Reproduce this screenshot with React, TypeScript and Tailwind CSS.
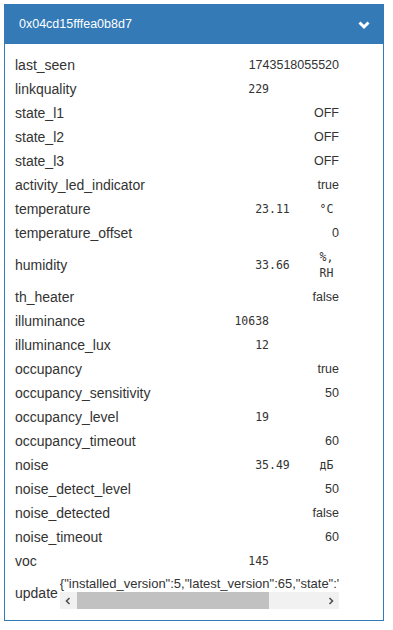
import { ReactNode } from 'react'

type Row = {
  name: string
  value?: string
  num?: string
  unit?: string
}

const rows: Row[] = [
  { name: 'last_seen', value: '1743518055520' },
  { name: 'linkquality', num: '229' },
  { name: 'state_l1', value: 'OFF' },
  { name: 'state_l2', value: 'OFF' },
  { name: 'state_l3', value: 'OFF' },
  { name: 'activity_led_indicator', value: 'true' },
  { name: 'temperature', num: '23.11', unit: '°C' },
  { name: 'temperature_offset', value: '0' },
  { name: 'humidity', num: '33.66', unit: '%, RH' },
  { name: 'th_heater', value: 'false' },
  { name: 'illuminance', num: '10638' },
  { name: 'illuminance_lux', num: '12' },
  { name: 'occupancy', value: 'true' },
  { name: 'occupancy_sensitivity', value: '50' },
  { name: 'occupancy_level', num: '19' },
  { name: 'occupancy_timeout', value: '60' },
  { name: 'noise', num: '35.49', unit: 'дБ' },
  { name: 'noise_detect_level', value: '50' },
  { name: 'noise_detected', value: 'false' },
  { name: 'noise_timeout', value: '60' },
  { name: 'voc', num: '145' },
]

const mono = "font-['DejaVu_Sans_Mono','Liberation_Mono',monospace] text-[11.5px]"

function NumberValue({ num, unit }: { num: string; unit?: string }) {
  const [int, frac] = num.split('.')
  return (
    <div className={`flex items-center ${mono}`}>
      <span className="flex-1 text-right">{int}</span>
      <span className="w-[45px] text-left">{frac ? '.' + frac : ''}</span>
      <span className="w-[25px] text-center leading-[16px]">{unit}</span>
    </div>
  )
}

function PropRow({ name, children }: { name: string; children: ReactNode }) {
  return (
    <div className="flex items-center py-[4px] min-h-[24px]">
      <div className="flex-1 text-[14px] leading-[16px]">{name}</div>
      <div className="w-[120px] text-right text-[12.5px] leading-[16px]">{children}</div>
    </div>
  )
}

// drawn scrollbar, the headless browser hides the native one
function HScrollbar() {
  return (
    <div className="flex h-[17px] bg-[#f1f1f1]">
      <div className="w-[17px] flex items-center justify-center">
        <svg width="6" height="8" viewBox="0 0 6 8">
          <polyline points="4.5,1 1.5,4 4.5,7" fill="none" stroke="#505050" strokeWidth="1.6" />
        </svg>
      </div>
      <div className="flex-1 flex items-center pr-[53px]">
        <div className="h-[17px] w-full bg-[#c1c1c1]" />
      </div>
      <div className="w-[17px] flex items-center justify-center">
        <svg width="6" height="8" viewBox="0 0 6 8">
          <polyline points="1.5,1 4.5,4 1.5,7" fill="none" stroke="#505050" strokeWidth="1.6" />
        </svg>
      </div>
    </div>
  )
}

export default function App() {
  return (
    <div className="p-[4px] font-['Liberation_Sans',Arial,sans-serif] text-[#333]">
      <div className="w-[380px] border border-[#337ab7] bg-white">
        <div className="flex items-center justify-between bg-[#337ab7] h-[39px] pl-[14px] pr-[13px] text-white text-[12.5px]">
          <span>0x04cd15fffea0b8d7</span>
          <svg width="12" height="10" viewBox="0 0 12 10" fill="none">
            <polyline points="1.5,2.5 6,7 10.5,2.5" stroke="white" strokeWidth="3" strokeLinejoin="miter" />
          </svg>
        </div>
        <div className="pt-[9px] pb-[8px] pl-[10px] pr-[44px]">
          {rows.map((r) => (
            <PropRow key={r.name} name={r.name}>
              {r.num ? <NumberValue num={r.num} unit={r.unit} /> : <span>{r.value}</span>}
            </PropRow>
          ))}
          <div className="flex items-center py-[3px]">
            <div className="shrink-0 text-[14px] leading-[16px]">update</div>
            <div className="flex-1 min-w-0 ml-[2px] flex flex-col">
              <div className="overflow-hidden whitespace-nowrap text-[13px] leading-[16px]">
                {'{"installed_version":5,"latest_version":65,"state":"available"}'}
              </div>
              <HScrollbar />
            </div>
          </div>
        </div>
      </div>
    </div>
  )
}
